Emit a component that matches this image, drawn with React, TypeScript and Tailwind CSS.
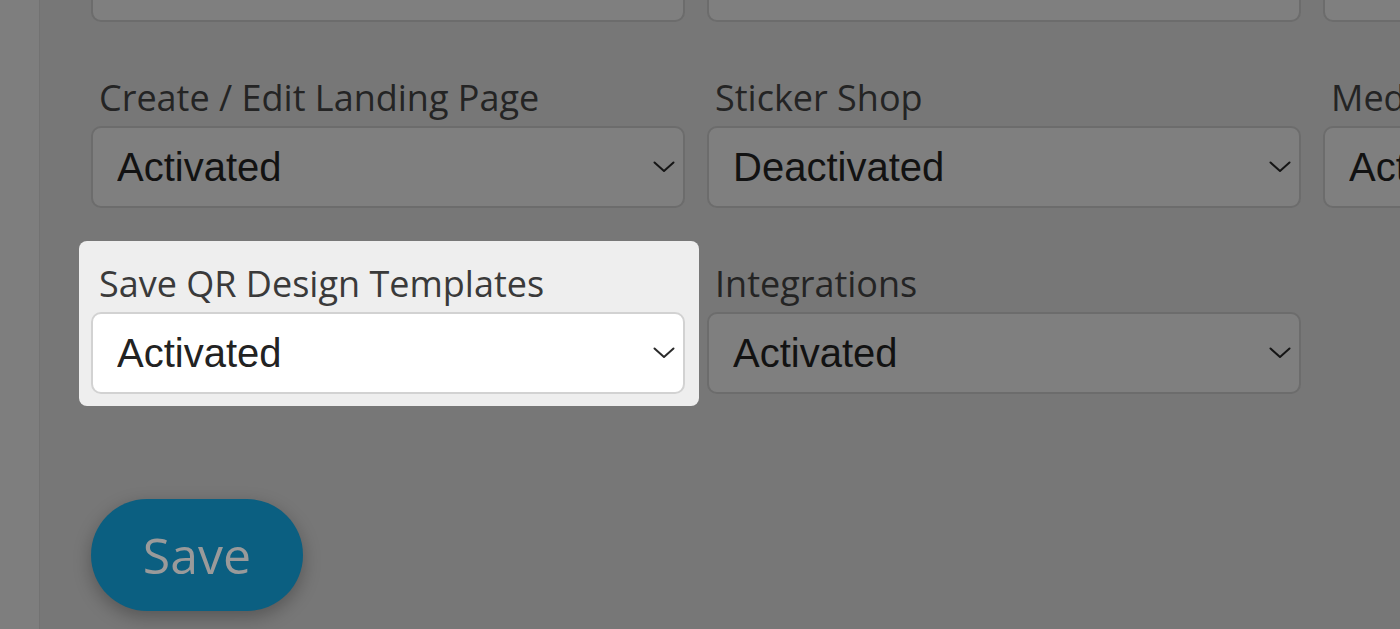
import { useState } from "react";

type Field = {
  label: string;
  value: string;
  focus?: boolean;
};

const rows: Field[][] = [
  [
    { label: "QR Code Analytics", value: "Activated" },
    { label: "Bulk QR Codes", value: "Activated" },
    { label: "API Access", value: "Activated" },
  ],
  [
    { label: "Create / Edit Landing Page", value: "Activated" },
    { label: "Sticker Shop", value: "Deactivated" },
    { label: "Media Library", value: "Activated" },
  ],
  [
    { label: "Save QR Design Templates", value: "Activated", focus: true },
    { label: "Integrations", value: "Activated" },
  ],
];

const Chevron = ({ dim }: { dim: boolean }) => (
  <svg
    width="22"
    height="12"
    viewBox="0 0 22 12"
    fill="none"
    className="pointer-events-none absolute right-[10px] top-1/2 -translate-y-1/2"
  >
    <polyline
      points="1.5,1.5 11,10 20.5,1.5"
      stroke={dim ? "#151515" : "#2a2a2a"}
      strokeWidth="2"
      strokeLinecap="round"
      strokeLinejoin="round"
    />
  </svg>
);

const SelectField = ({ field }: { field: Field }) => {
  const [value, setValue] = useState(field.value);
  const lit = !!field.focus;

  return (
    <div
      className={
        lit
          ? "relative -mb-3 -ml-3 -mr-[14px] -mt-[18px] rounded-lg bg-[#eeeeee] pb-3 pl-3 pr-[14px] pt-[18px]"
          : ""
      }
    >
      <label
        className={`block whitespace-nowrap pl-[8px] font-['Open_Sans',sans-serif] text-[36px] leading-[49px] ${
          lit ? "text-[#3a3a3a]" : "text-[#242424]"
        }`}
      >
        {field.label}
      </label>
      <div className="relative mt-[4px]">
        <select
          value={value}
          onChange={(e) => setValue(e.target.value)}
          className={`block h-[82px] w-full appearance-none rounded-[10px] border-2 pl-[24px] font-['Liberation_Sans',Arial,sans-serif] text-[40px] outline-none ${
            lit
              ? "border-[#d2d2d2] bg-white text-[#222]"
              : "border-[#6c6c6c] bg-[#7f7f7f] text-[#121212]"
          }`}
        >
          <option>Activated</option>
          <option>Deactivated</option>
        </select>
        <Chevron dim={!lit} />
      </div>
    </div>
  );
};

export default function App() {
  return (
    <div className="flex h-screen overflow-hidden bg-[#777777]">
      <aside className="w-10 shrink-0 border-r border-[#727272] bg-[#7e7e7e]" />
      <main className="min-w-0 flex-1 pl-[51px]">
        <div className="-mt-[113px] grid w-max grid-cols-[594px_594px_594px] gap-x-[22px] gap-y-[51px]">
          {rows.flat().map((field) => (
            <SelectField key={field.label} field={field} />
          ))}
        </div>
        <button className="mt-[105px] h-[112px] w-[212px] rounded-full bg-[#0b5f81] font-['Open_Sans',sans-serif] text-[50px] text-[#9a9a9a] shadow-[0_6px_18px_rgba(0,0,0,0.28)]">
          Save
        </button>
      </main>
    </div>
  );
}
